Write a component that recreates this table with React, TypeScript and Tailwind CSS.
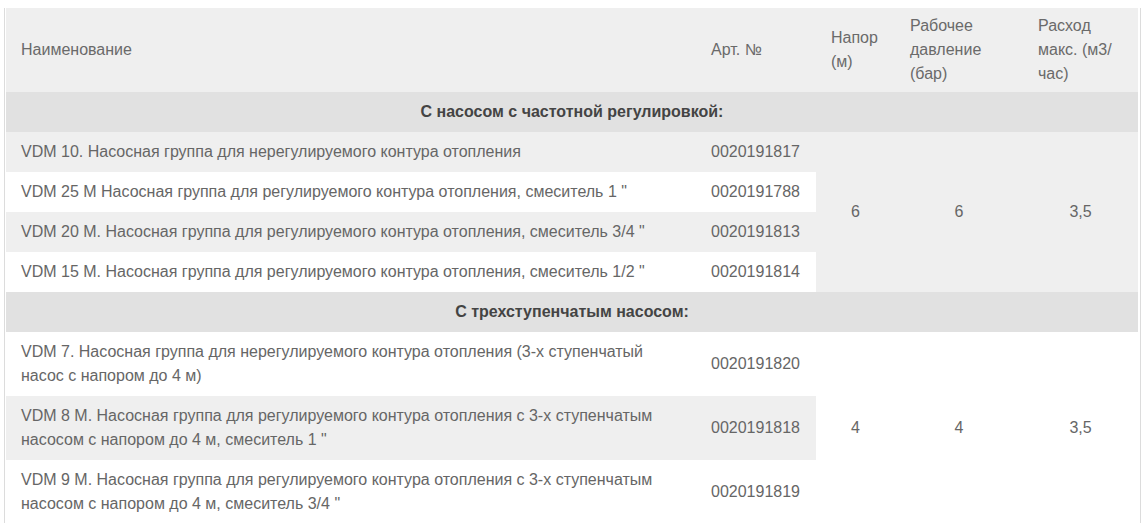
const groups = [
  {
    title: "С насосом с частотной регулировкой:",
    napor: "6",
    pressure: "6",
    flow: "3,5",
    spanBg: "bg-[#efefef]",
    rows: [
      { name: "VDM 10. Насосная группа для нерегулируемого контура отопления", art: "0020191817", bg: "bg-[#efefef]" },
      { name: "VDM 25 M Насосная группа для регулируемого контура отопления, смеситель 1 \"", art: "0020191788", bg: "bg-white" },
      { name: "VDM 20 M. Насосная группа для регулируемого контура отопления, смеситель 3/4 \"", art: "0020191813", bg: "bg-[#efefef]" },
      { name: "VDM 15 M. Насосная группа для регулируемого контура отопления, смеситель 1/2 \"", art: "0020191814", bg: "bg-white" }
    ]
  },
  {
    title: "С трехступенчатым насосом:",
    napor: "4",
    pressure: "4",
    flow: "3,5",
    spanBg: "bg-white",
    rows: [
      { name: "VDM 7. Насосная группа для нерегулируемого контура отопления (3-х ступенчатый насос с напором до 4 м)", art: "0020191820", bg: "bg-white" },
      { name: "VDM 8 M. Насосная группа для регулируемого контура отопления с 3-х ступенчатым насосом с напором до 4 м, смеситель 1 \"", art: "0020191818", bg: "bg-[#efefef]" },
      { name: "VDM 9 M. Насосная группа для регулируемого контура отопления с 3-х ступенчатым насосом с напором до 4 м, смеситель 3/4 \"", art: "0020191819", bg: "bg-white" }
    ]
  }
];

export default function App() {
  return (
    <div className="h-[523px] w-[1144px] overflow-hidden bg-white font-['Liberation_Sans',Arial,sans-serif] text-[16px] leading-6 text-[#666]">
      <div className="ml-[4px] mt-[8px] w-[1137px] border-x border-[#dcdcdc] px-[1px]">
        <table className="w-[1132px] table-fixed border-collapse">
          <colgroup>
            <col className="w-[690px]" />
            <col className="w-[120px]" />
            <col className="w-[79px]" />
            <col className="w-[128px]" />
            <col className="w-[115px]" />
          </colgroup>
          <thead>
            <tr className="bg-[#efefef] text-left align-middle text-[#6a6a6a]">
              <th className="px-[15px] py-[6px] font-normal">Наименование</th>
              <th className="px-[15px] py-[6px] font-normal">Арт. №</th>
              <th className="px-[15px] py-[6px] font-normal">Напор (м)</th>
              <th className="px-[15px] py-[6px] font-normal">Рабочее давление (бар)</th>
              <th className="px-[15px] py-[6px] font-normal">Расход макс. (м3/час)</th>
            </tr>
          </thead>
          <tbody>
            {groups.map((group) => (
              <Group key={group.title} group={group} />
            ))}
          </tbody>
        </table>
      </div>
    </div>
  );
}

function Group({ group }: { group: (typeof groups)[number] }) {
  return (
    <>
      <tr className="bg-[#e1e1e1]">
        <td colSpan={5} className="px-[15px] py-2 text-center font-bold text-[#444]">
          {group.title}
        </td>
      </tr>
      {group.rows.map((row, i) => (
        <tr key={row.art} className="align-middle">
          <td className={`${row.bg} px-[15px] py-2`}>{row.name}</td>
          <td className={`${row.bg} px-[15px] py-2`}>{row.art}</td>
          {i === 0 ? (
            <>
              <td rowSpan={group.rows.length} className={`${group.spanBg} px-[15px] text-center`}>
                {group.napor}
              </td>
              <td rowSpan={group.rows.length} className={`${group.spanBg} px-[15px] text-center`}>
                {group.pressure}
              </td>
              <td rowSpan={group.rows.length} className={`${group.spanBg} px-[15px] text-center`}>
                {group.flow}
              </td>
            </>
          ) : null}
        </tr>
      ))}
    </>
  );
}
